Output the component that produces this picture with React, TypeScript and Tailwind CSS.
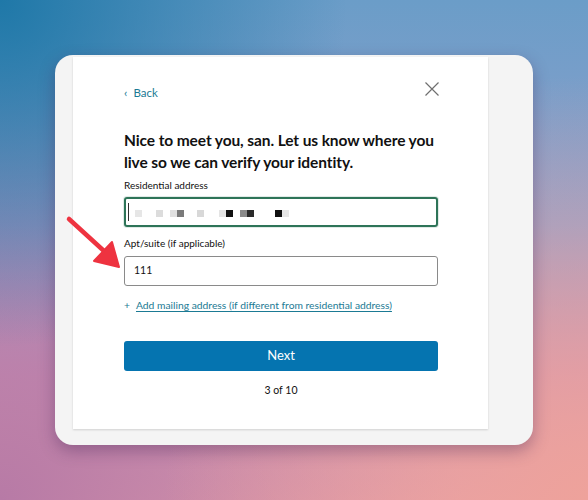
import React from "react";

const sq = (x: number, c: string) => ({ x, c });
const squares = [
  sq(135, "#e6e6e6"),
  sq(156, "#dcdcdc"),
  sq(170, "#e0e0e0"),
  sq(177, "#7a7a7a"),
  sq(197, "#d8d8d8"),
  sq(219, "#e4e4e4"),
  sq(226, "#111111"),
  sq(240, "#8a8a8a"),
  sq(247, "#2a2a2a"),
  sq(275, "#111111"),
  sq(282, "#e6e6e6"),
];

export default function App() {
  return (
    <div
      className="relative w-[588px] h-[500px] overflow-hidden bg-[radial-gradient(circle_at_0%_0%,#1f78a8_0%,transparent_45%),radial-gradient(circle_at_100%_100%,#eea29b_0%,transparent_55%),radial-gradient(circle_at_0%_100%,#b77aa6_0%,transparent_60%),linear-gradient(180deg,#6b9dc8_0%,#8fa0cc_45%,#c994b8_75%,#e3a0ac_100%)]"
      style={{ fontFamily: 'Lato, "Noto Sans", Arial, sans-serif' }}
    >
      <div className="absolute left-[55px] top-[55px] w-[478px] h-[390px] rounded-[18px] bg-[#f4f4f4] shadow-[0_6px_16px_rgba(60,30,80,0.35)] pt-[2px] pl-[18px]">
        <div className="w-[415px] h-[372px] bg-white shadow-[0_1px_2px_rgba(0,0,0,0.15)] pl-[51px] pr-[50px] flex flex-col">
          <div className="flex items-center justify-between mt-[28px] h-[16px]">
            <div className="flex items-center gap-[6px] text-[#1b7a94] text-[11.5px]">
              <span className="text-[12px] leading-none mt-[-1px]">‹</span>
              <span>Back</span>
            </div>
            <svg width="14" height="14" viewBox="0 0 14 14" className="mr-[-1px] mt-[-8px]">
              <path d="M0.5 0.5L13.5 13.5M13.5 0.5L0.5 13.5" stroke="#6f6f6f" strokeWidth="1.2" />
            </svg>
          </div>
          <h1 className="mt-[28px] mr-[-8px] text-[15.5px] leading-[22px] font-bold text-[#111] tracking-[-0.1px]">
            Nice to meet you, san. Let us know where you live so we can verify your identity.
          </h1>
          <label className="mt-[5.5px] text-[10px] leading-[13px] text-[#111]">Residential address</label>
          <div className="relative mt-[5.5px] h-[30px] rounded-[3px] border-2 border-[#2e7458] shadow-[0_0_0_1px_rgba(46,116,88,0.15)]">
            <div className="absolute left-[2px] top-[4px] w-[1px] h-[18px] bg-[#333]" />
            {squares.map((s, i) => (
              <div
                key={i}
                className="absolute top-[11px] w-[7px] h-[7px]"
                style={{ left: s.x - 126, background: s.c }}
              />
            ))}
          </div>
          <label className="mt-[9.5px] text-[10px] leading-[13px] text-[#111]">Apt/suite (if applicable)</label>
          <div className="mt-[6.5px] h-[30px] rounded-[3px] border border-[#8a8a8a] flex items-center pl-[9px] text-[10.5px] text-[#111]">
            111
          </div>
          <div className="mt-[13px] h-[14px] flex items-center gap-[6px] text-[10.3px] text-[#1b7a94]">
            <span>+</span>
            <span className="underline underline-offset-2">Add mailing address (if different from residential address)</span>
          </div>
          <button className="mt-[28px] h-[30px] rounded-[3px] bg-[#0574b0] text-white text-[13px]">Next</button>
          <div className="mt-[12px] h-[14px] leading-[14px] text-center text-[10.5px] text-[#111]">3 of 10</div>
        </div>
      </div>
      <svg className="absolute left-0 top-0" width="588" height="500" viewBox="0 0 588 500">
        <path d="M69 219 L104 251" stroke="#ee3340" strokeWidth="4.5" strokeLinecap="round" />
        <path d="M119 267 L94 261 L112 242 Z" fill="#ee3340" stroke="#ee3340" strokeWidth="2" strokeLinejoin="round" />
      </svg>
    </div>
  );
}
